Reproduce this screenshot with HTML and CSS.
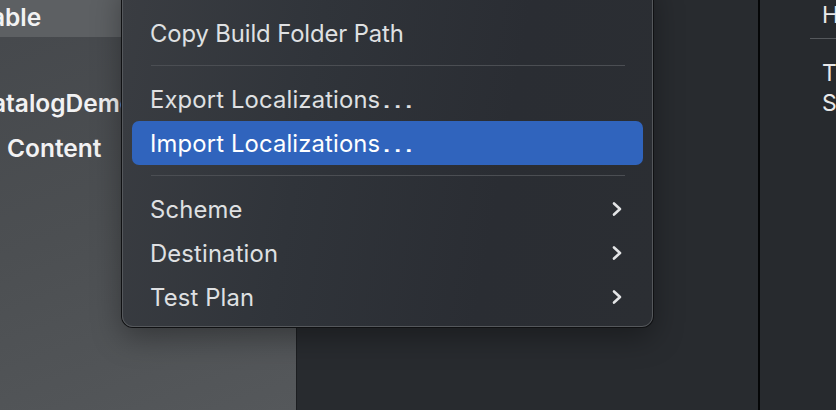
FILE: index.html
```html
<!DOCTYPE html>
<html>
<head>
<meta charset="utf-8">
<link rel="stylesheet" href="styles.css">
</head>
<body>
<div class="window">
  <aside class="sidebar">
    <div class="side-row selected">able</div>
    <div class="side-gap"></div>
    <div class="side-row">atalogDemo</div>
    <div class="side-row indent">Content</div>
  </aside>
  <main class="editor"></main>
  <section class="inspector">
    <div class="insp-row">H</div>
    <div class="insp-sep"></div>
    <div class="insp-row">T</div>
    <div class="insp-row">S</div>
  </section>
</div>

<div class="menu">
  <div class="item">Copy Build Folder Path</div>
  <div class="sep"></div>
  <div class="item"><span>Export Localizations<span class="ell">…</span></span></div>
  <div class="item active"><span>Import Localizations<span class="ell">…</span></span></div>
  <div class="sep"></div>
  <div class="item">Scheme<svg class="chev" viewBox="0 0 12 16"><path d="M3 2.5 L9 8 L3 13.5"/></svg></div>
  <div class="item">Destination<svg class="chev" viewBox="0 0 12 16"><path d="M3 2.5 L9 8 L3 13.5"/></svg></div>
  <div class="item">Test Plan<svg class="chev" viewBox="0 0 12 16"><path d="M3 2.5 L9 8 L3 13.5"/></svg></div>
</div>
</body>
</html>
```

FILE: styles.css
```css
html, body {
  margin: 0;
  padding: 0;
  width: 836px;
  height: 410px;
  overflow: hidden;
  background: #282b2f;
  font-family: Inter, "Noto Sans", "Liberation Sans", sans-serif;
  position: relative;
}

.window {
  display: flex;
  height: 410px;
}

.sidebar {
  width: 296px;
  flex: none;
  background: linear-gradient(160deg, #45484c 0%, #4c4f52 50%, #55585b 100%);
  border-right: 1px solid #1c1e21;
  color: #f2f2f3;
  font-weight: 600;
  font-size: 24.5px;
  overflow: hidden;
}

.side-row {
  height: 44px;
  line-height: 44px;
  white-space: nowrap;
  margin-left: -8px;
}

.side-row.selected {
  height: 37px;
  line-height: 35px;
  background: #5d6063;
  margin-left: 0;
  text-indent: -9px;
}

.side-gap {
  height: 44px;
}

.side-row.indent {
  margin-left: 7px;
  margin-top: 1px;
}

.editor {
  flex: 1;
  background: #282b2f;
  border-right: 2px solid #050607;
}

.inspector {
  width: 76px;
  flex: none;
  background: #272a2e;
  color: #e8e8e9;
  font-size: 23px;
  padding-left: 62px;
  box-sizing: border-box;
  overflow: hidden;
}

.insp-row {
  height: 30px;
  line-height: 30px;
  white-space: nowrap;
}

.insp-sep {
  height: 1px;
  background: #55585c;
  margin: 8px 0 19px -12px;
}

.menu {
  position: absolute;
  left: 122px;
  top: -20px;
  width: 531px;
  box-sizing: border-box;
  padding: 30px 9px 7px;
  border-radius: 11px;
  background: linear-gradient(100deg, #3a3d42 0%, #30343a 35%, #2a2d33 70%, #2b2e33 100%);
  border: 1px solid #55585c;
  box-shadow: 0 0 0 1px #101113, 0 10px 30px rgba(0,0,0,0.35);
  color: #dfe0e2;
  font-size: 23.8px;
}

.item {
  height: 44px;
  display: flex;
  align-items: center;
  justify-content: space-between;
  padding: 0 20px 0 18px;
  border-radius: 7px;
  letter-spacing: 0.15px;
}

.item:first-child {
  letter-spacing: -0.1px;
}

.ell {
  letter-spacing: 0;
  display: inline-block;
  margin-left: 1px;
  font-family: "DejaVu Sans", sans-serif;
  font-size: 23px;
  transform: scaleX(1.45);
  transform-origin: left center;
}

.item.active {
  background: #3064bd;
  color: #ffffff;
}

.sep {
  height: 1px;
  background: #4b4e53;
  margin: 10px 18px 11px 19px;
}

.chev {
  width: 12px;
  height: 16px;
}

.chev path {
  fill: none;
  stroke: #e3e4e6;
  stroke-width: 2.6;
  stroke-linecap: round;
  stroke-linejoin: round;
}
```
